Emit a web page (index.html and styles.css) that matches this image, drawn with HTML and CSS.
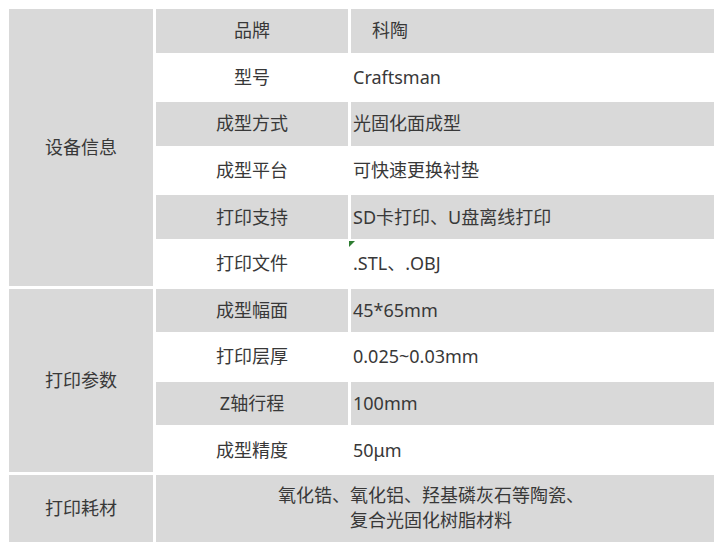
FILE: index.html
```html
<!DOCTYPE html>
<html lang="zh-CN">
<head>
<meta charset="utf-8">
<title>设备参数</title>
<link rel="stylesheet" href="styles.css">
</head>
<body>
<div class="spec">
  <div class="cell group g span6">设备信息</div>
  <div class="cell key g">品牌</div><div class="cell val g indent">科陶</div>
  <div class="cell key">型号</div><div class="cell val">Craftsman</div>
  <div class="cell key g">成型方式</div><div class="cell val g">光固化面成型</div>
  <div class="cell key">成型平台</div><div class="cell val">可快速更换衬垫</div>
  <div class="cell key g">打印支持</div><div class="cell val g">SD卡打印、U盘离线打印</div>
  <div class="cell key">打印文件</div><div class="cell val flagged"><span class="flag"></span>.STL、.OBJ</div>

  <div class="cell group g span4">打印参数</div>
  <div class="cell key g">成型幅面</div><div class="cell val g">45*65mm</div>
  <div class="cell key">打印层厚</div><div class="cell val">0.025~0.03mm</div>
  <div class="cell key g">Z轴行程</div><div class="cell val g">100mm</div>
  <div class="cell key">成型精度</div><div class="cell val">50μm</div>

  <div class="cell group g">打印耗材</div>
  <div class="cell wide g">氧化锆、氧化铝、羟基磷灰石等陶瓷、<br>复合光固化树脂材料</div>
</div>
</body>
</html>
```
FILE: styles.css
```css
html, body {
  margin: 0;
  padding: 0;
  background: #ffffff;
}
body {
  padding: 9px 0 0 9px;
  font-family: "Noto Sans", "Noto Sans CJK SC", sans-serif;
  font-size: 18px;
  color: #383838;
}
.spec {
  display: grid;
  grid-template-columns: 144px 192px 363px;
  grid-template-rows: repeat(6, 43.6px) repeat(4, 43.6px) 67px;
  column-gap: 3px;
  row-gap: 3px;
}
.cell {
  display: flex;
  align-items: center;
  line-height: 25px;
  white-space: nowrap;
}
.g {
  background: #d9d9d9;
}
.group {
  grid-column: 1;
  justify-content: center;
}
.span6 { grid-row: span 6; }
.span4 { grid-row: span 4; }
.key {
  justify-content: center;
}
.val {
  padding-left: 2px;
}
.indent {
  padding-left: 21px;
}
.wide {
  grid-column: 2 / span 2;
  justify-content: center;
  text-align: center;
  padding-right: 8px;
}
.flagged {
  position: relative;
}
.flag {
  position: absolute;
  left: -2px;
  top: -1px;
  width: 0;
  height: 0;
  border-top: 6px solid #2e7d32;
  border-right: 6px solid transparent;
}
```
